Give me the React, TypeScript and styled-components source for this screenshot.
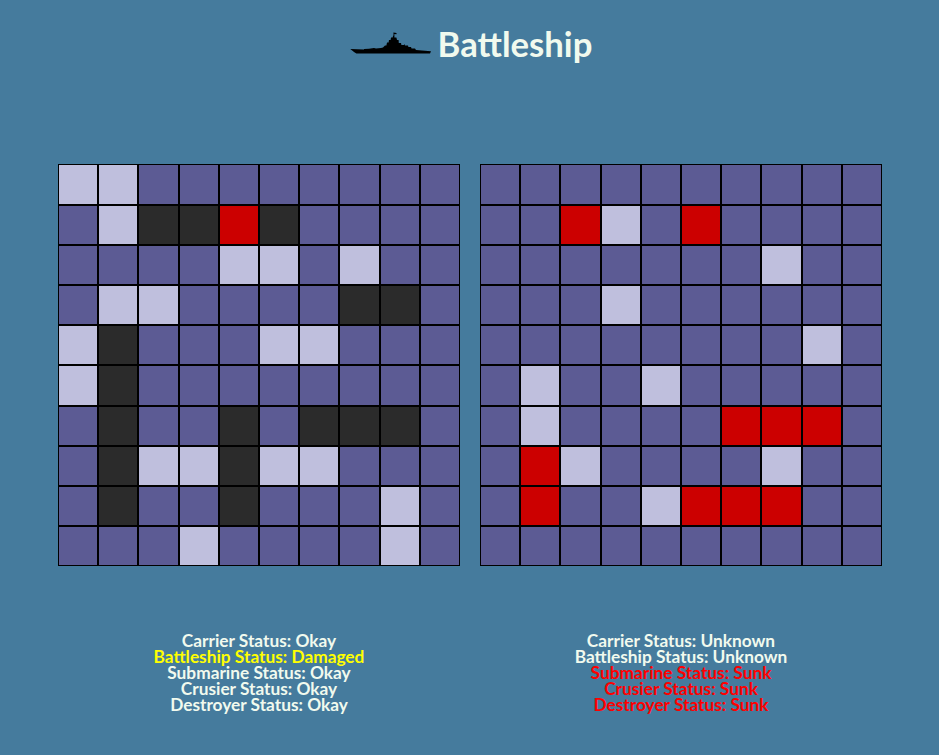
import React from 'react';
import styled, { createGlobalStyle } from 'styled-components';

const colors = {
  page: '#457b9d',
  text: '#f1faee',
  water: '#5c5b94',
  miss: '#bfbfdd',
  ship: '#2b2b2b',
  hit: '#cc0000',
  warn: '#ffff00',
  sunk: '#ff0000',
};

type CellKind = 'w' | 'm' | 's' | 'h';

const cellColors: Record<CellKind, string> = {
  w: colors.water,
  m: colors.miss,
  s: colors.ship,
  h: colors.hit,
};

const playerBoard = [
  'mmwwwwwwww',
  'wmsshswwww',
  'wwwwmmwmww',
  'wmmwwwwssw',
  'mswwwmmwww',
  'mswwwwwwww',
  'wswwswsssw',
  'wsmmsmmwww',
  'wswwswwwmw',
  'wwwmwwwwmw',
];

const enemyBoard = [
  'wwwwwwwwww',
  'wwhmwhwwww',
  'wwwwwwwmww',
  'wwwmwwwwww',
  'wwwwwwwwmw',
  'wmwwmwwwww',
  'wmwwwwhhhw',
  'whmwwwwmww',
  'whwwmhhhww',
  'wwwwwwwwww',
];

const playerStatus = [
  { text: 'Carrier Status: Okay', tone: 'ok' },
  { text: 'Battleship Status: Damaged', tone: 'warn' },
  { text: 'Submarine Status: Okay', tone: 'ok' },
  { text: 'Crusier Status: Okay', tone: 'ok' },
  { text: 'Destroyer Status: Okay', tone: 'ok' },
];

const enemyStatus = [
  { text: 'Carrier Status: Unknown', tone: 'ok' },
  { text: 'Battleship Status: Unknown', tone: 'ok' },
  { text: 'Submarine Status: Sunk', tone: 'sunk' },
  { text: 'Crusier Status: Sunk', tone: 'sunk' },
  { text: 'Destroyer Status: Sunk', tone: 'sunk' },
];

const toneColors: Record<string, string> = {
  ok: colors.text,
  warn: colors.warn,
  sunk: colors.sunk,
};

const GlobalStyle = createGlobalStyle`
  html, body {
    margin: 0;
    padding: 0;
    background-color: ${colors.page};
  }
  body {
    font-family: 'Lato', 'Open Sans', sans-serif;
    color: ${colors.text};
  }
`;

const Page = styled.div`
  width: 939px;
  height: 755px;
  overflow: hidden;
`;

const Header = styled.header`
  height: 164.4px;
  padding: 24px 0 0 3px;
  box-sizing: border-box;
  display: flex;
  justify-content: center;
  align-items: flex-start;
  gap: 6px;
`;

const Title = styled.h1`
  margin: 0;
  font-size: 34.7px;
  line-height: 40px;
  font-weight: 700;
`;

const ShipIcon = styled.svg`
  width: 82px;
  height: 24px;
  margin-top: 8px;
`;

const Boards = styled.main`
  display: grid;
  grid-template-columns: 402px 402px;
  justify-content: center;
  column-gap: 20px;
  padding-left: 1px;
`;

const Board = styled.div`
  display: grid;
  grid-template-columns: repeat(10, 40.2px);
  grid-template-rows: repeat(10, 40.2px);
`;

const Cell = styled.div<{ $kind: CellKind }>`
  box-sizing: border-box;
  border: 1px solid #000;
  background-color: ${(p) => cellColors[p.$kind]};
`;

const StatusRow = styled.section`
  display: grid;
  grid-template-columns: 402px 402px;
  justify-content: center;
  column-gap: 20px;
  padding: 67px 0 0 1px;
`;

const StatusList = styled.div`
  text-align: center;
`;

const StatusLine = styled.div<{ $tone: string }>`
  font-size: 17.3px;
  line-height: 16px;
  font-weight: 700;
  color: ${(p) => toneColors[p.$tone]};
`;

const Ship = () => (
  <ShipIcon viewBox="0 0 82 24" aria-hidden="true">
    <path
      fill="#000"
      d="M0.3 17 L14 17.6 L14 17 L19 16.8 L24 16 L26 16.6 L31 16 L33 15.4 L35 13.4 L36.4 13.4 L37 10.4 L38.6 10.4 L39 8 L40.6 8 L41 5.4 L42.6 5.4 L43.2 3.6 L44.4 3.6 L44.4 5.4 L46.4 5.6 L47 8 L48.6 8 L48.8 11 L51 11 L51.4 13 L54 13 L54.4 12 L55 13.4 L58 13.6 L58.4 15 L61 15 L61.6 16.4 L65 16.6 L66 18 L72 18.6 L81 19.2 L80 21.4 L6.4 21.4 L4 20 Z M43.4 0.6 L46.6 1 L46.4 2.2 L44.4 2 L44.4 3.6 L43.6 3.6 Z"
    />
  </ShipIcon>
);

const StatusColumn = ({ items }: { items: { text: string; tone: string }[] }) => (
  <StatusList>
    {items.map((item) => (
      <StatusLine key={item.text} $tone={item.tone}>
        {item.text}
      </StatusLine>
    ))}
  </StatusList>
);

const BoardGrid = ({ rows }: { rows: string[] }) => (
  <Board>
    {rows.join('').split('').map((kind, i) => (
      <Cell key={i} $kind={kind as CellKind} />
    ))}
  </Board>
);

export default function App() {
  return (
    <Page>
      <GlobalStyle />
      <Header>
        <Ship />
        <Title>Battleship</Title>
      </Header>
      <Boards>
        <BoardGrid rows={playerBoard} />
        <BoardGrid rows={enemyBoard} />
      </Boards>
      <StatusRow>
        <StatusColumn items={playerStatus} />
        <StatusColumn items={enemyStatus} />
      </StatusRow>
    </Page>
  );
}
